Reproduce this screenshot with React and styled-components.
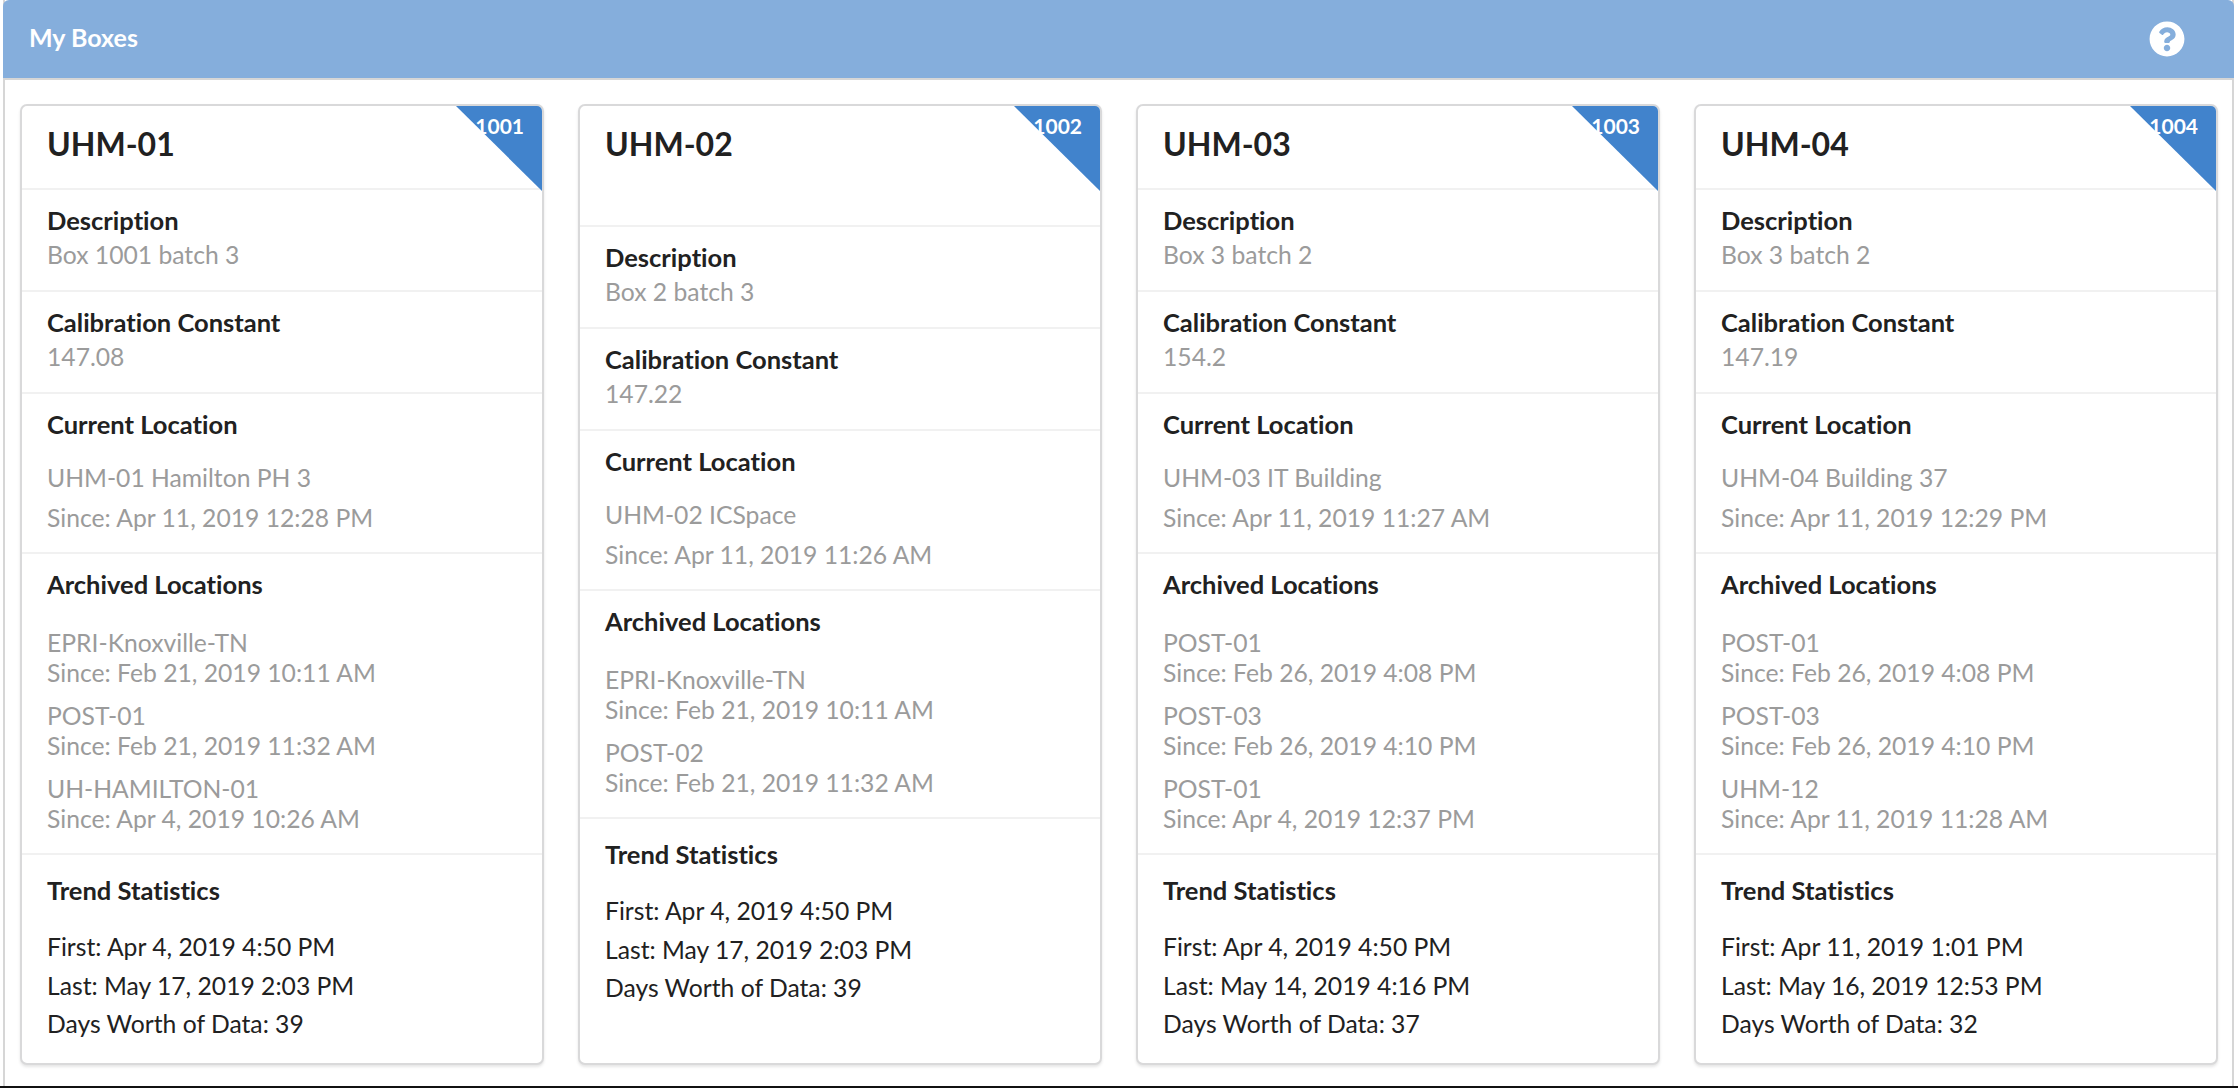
import React from "react";
import styled, { createGlobalStyle } from "styled-components";
import { FaQuestionCircle } from "react-icons/fa";

const boxes = [
    {
        name: "UHM-01",
        id: 1001,
        description: "Box 1001 batch 3",
        constant: "147.08",
        current: ["UHM-01 Hamilton PH 3", "Since: Apr 11, 2019 12:28 PM"],
        archived: [
            ["EPRI-Knoxville-TN", "Since: Feb 21, 2019 10:11 AM"],
            ["POST-01", "Since: Feb 21, 2019 11:32 AM"],
            ["UH-HAMILTON-01", "Since: Apr 4, 2019 10:26 AM"],
        ],
        trend: ["First: Apr 4, 2019 4:50 PM", "Last: May 17, 2019 2:03 PM", "Days Worth of Data: 39"],
    },
    {
        name: "UHM-02",
        id: 1002,
        tall: true,
        description: "Box 2 batch 3",
        constant: "147.22",
        current: ["UHM-02 ICSpace", "Since: Apr 11, 2019 11:26 AM"],
        archived: [
            ["EPRI-Knoxville-TN", "Since: Feb 21, 2019 10:11 AM"],
            ["POST-02", "Since: Feb 21, 2019 11:32 AM"],
        ],
        trend: ["First: Apr 4, 2019 4:50 PM", "Last: May 17, 2019 2:03 PM", "Days Worth of Data: 39"],
    },
    {
        name: "UHM-03",
        id: 1003,
        description: "Box 3 batch 2",
        constant: "154.2",
        current: ["UHM-03 IT Building", "Since: Apr 11, 2019 11:27 AM"],
        archived: [
            ["POST-01", "Since: Feb 26, 2019 4:08 PM"],
            ["POST-03", "Since: Feb 26, 2019 4:10 PM"],
            ["POST-01", "Since: Apr 4, 2019 12:37 PM"],
        ],
        trend: ["First: Apr 4, 2019 4:50 PM", "Last: May 14, 2019 4:16 PM", "Days Worth of Data: 37"],
    },
    {
        name: "UHM-04",
        id: 1004,
        description: "Box 3 batch 2",
        constant: "147.19",
        current: ["UHM-04 Building 37", "Since: Apr 11, 2019 12:29 PM"],
        archived: [
            ["POST-01", "Since: Feb 26, 2019 4:08 PM"],
            ["POST-03", "Since: Feb 26, 2019 4:10 PM"],
            ["UHM-12", "Since: Apr 11, 2019 11:28 AM"],
        ],
        trend: ["First: Apr 11, 2019 1:01 PM", "Last: May 16, 2019 12:53 PM", "Days Worth of Data: 32"],
    },
];

const BoxCard = ({ box }) => (
    <Card>
        <Corner />
        <CornerId>{box.id}</CornerId>
        <Title $tall={box.tall}>{box.name}</Title>
        <Section $bottom={18}>
            <Label>Description</Label>
            <Single>{box.description}</Single>
        </Section>
        <Section $bottom={18}>
            <Label>Calibration Constant</Label>
            <Single>{box.constant}</Single>
        </Section>
        <Section $bottom={14}>
            <Label>Current Location</Label>
            <Lines $top={17}>
                {box.current.map((line) => (
                    <CurrentLine key={line}>{line}</CurrentLine>
                ))}
            </Lines>
        </Section>
        <Section $bottom={19}>
            <Label>Archived Locations</Label>
            <Lines $top={27}>
                {box.archived.map((item) => (
                    <Archive key={item.join()}>
                        <Value>{item[0]}</Value>
                        <Value>{item[1]}</Value>
                    </Archive>
                ))}
            </Lines>
        </Section>
        <TrendSection>
            <Label>Trend Statistics</Label>
            <Lines $top={21}>
                {box.trend.map((line) => (
                    <Stat key={line}>{line}</Stat>
                ))}
            </Lines>
        </TrendSection>
    </Card>
);

const App = () => {
    return (
        <>
            <GlobalStyle />
            <Page>
                <Panel>
                    <Bar>
                        <BarTitle>My Boxes</BarTitle>
                        <FaQuestionCircle size={36} color="#fff" />
                    </Bar>
                    <Grid>
                        {boxes.map((box) => (
                            <BoxCard key={box.id} box={box} />
                        ))}
                    </Grid>
                </Panel>
            </Page>
        </>
    );
};

export default App;

const GlobalStyle = createGlobalStyle`
    html, body {
        margin: 0;
        padding: 0;
        background: #fff;
    }
    body {
        font-family: Lato, "Liberation Sans", sans-serif;
        font-variant-ligatures: none;
        color: #212121;
    }
`;
const Page = styled.div`
    width: 2238px;
    height: 1088px;
    overflow: hidden;
    box-sizing: border-box;
    padding: 0 4px 0 3px;
    border-bottom: 2px solid #111;
`;
const Panel = styled.div`
    height: 100%;
    box-sizing: border-box;
    border-left: 2px solid #d6d6d6;
    border-right: 2px solid #d6d6d6;
`;
const Bar = styled.div`
    height: 78px;
    border-bottom: 2px solid #d6d6d6;
    border-top-left-radius: 6px;
    border-top-right-radius: 6px;
    margin: 0 -2px;
    background: #85aedc;
    display: flex;
    align-items: center;
    justify-content: space-between;
    padding: 0 49px 0 26px;
`;
const BarTitle = styled.div`
    color: #fff;
    font-size: 25px;
    font-weight: 700;
    padding-bottom: 5px;
`;
const Grid = styled.div`
    display: grid;
    grid-template-columns: repeat(4, 524px);
    gap: 34px;
    padding: 24px 0 0 15px;
`;
const Card = styled.div`
    position: relative;
    height: 961px;
    box-sizing: border-box;
    background: #fff;
    border: 2px solid #d9d9da;
    border-radius: 7px;
    box-shadow: 0 2px 3px 0 rgba(0, 0, 0, 0.1);
    display: flex;
    flex-direction: column;
    overflow: hidden;
`;
const Corner = styled.div`
    position: absolute;
    top: 0;
    right: 0;
    width: 86px;
    height: 85px;
    background: #4183cc;
    clip-path: polygon(0 0, 100% 0, 100% 100%);
`;
const CornerId = styled.div`
    position: absolute;
    top: 8px;
    right: 18px;
    color: #fff;
    font-size: 21px;
    font-weight: 700;
    line-height: 24px;
`;
const Title = styled.div`
    height: ${({ $tall }) => ($tall ? "121px" : "84px")};
    box-sizing: border-box;
    padding: 17px 25px 0;
    font-size: 32px;
    font-weight: 700;
    line-height: 42px;
    border-bottom: 2px solid #f1f1f1;
    flex: none;
`;
const Section = styled.div`
    padding: 13px 25px ${({ $bottom }) => $bottom}px;
    border-bottom: 2px solid #f1f1f1;
`;
const TrendSection = styled.div`
    padding: 18px 25px 0;
`;
const Label = styled.div`
    font-size: 25.5px;
    font-weight: 700;
    line-height: 34px;
`;
const Value = styled.div`
    font-size: 24.7px;
    color: #9b9b9b;
    line-height: 30px;
`;
const Single = styled(Value)`
    line-height: 34px;
    margin-top: 1px;
`;
const CurrentLine = styled(Value)`
    line-height: 40px;
`;
const Lines = styled.div`
    margin-top: ${({ $top }) => $top}px;
    display: flex;
    flex-direction: column;
`;
const Archive = styled.div`
    margin-bottom: 13px;
    &:last-child {
        margin-bottom: 0;
    }
`;
const Stat = styled.div`
    font-size: 24.7px;
    line-height: 38.5px;
`;
